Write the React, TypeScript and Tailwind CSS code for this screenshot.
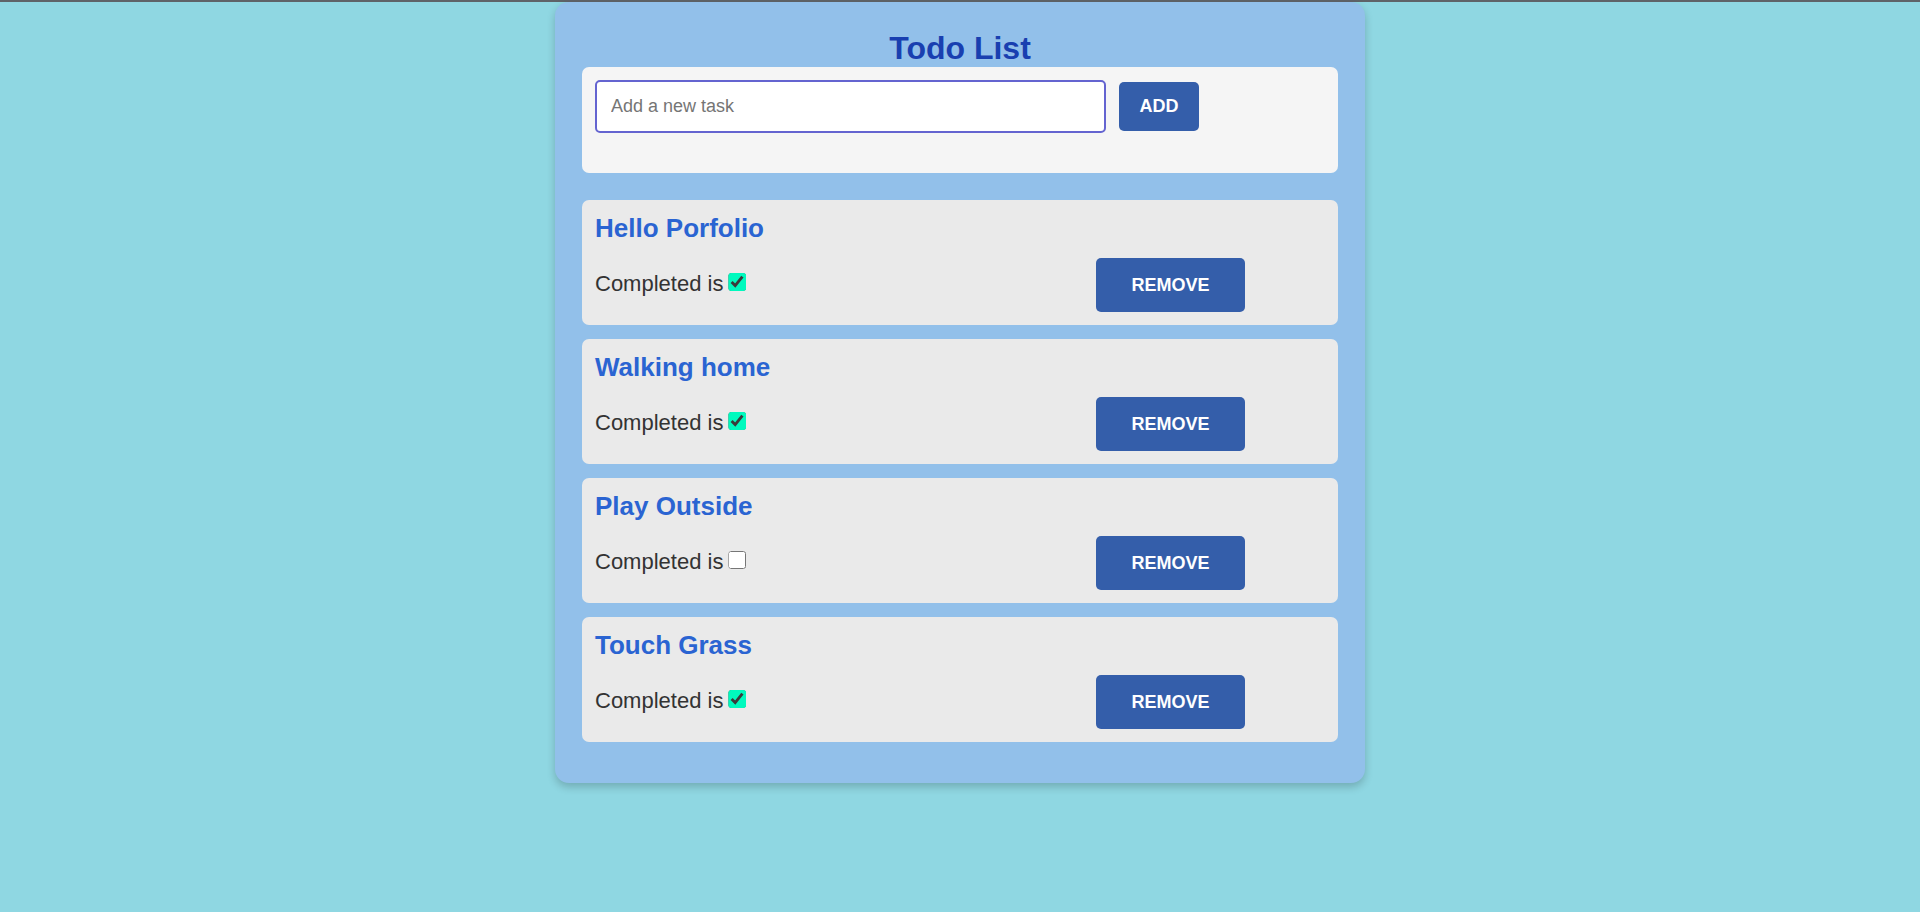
import { useState } from "react";
import type { FormEvent } from "react";

type Task = { id: number; title: string; completed: boolean };

const initialTasks: Task[] = [
  { id: 1, title: "Hello Porfolio", completed: true },
  { id: 2, title: "Walking home", completed: true },
  { id: 3, title: "Play Outside", completed: false },
  { id: 4, title: "Touch Grass", completed: true },
];

function TaskItem({
  task,
  onToggle,
  onRemove,
}: {
  task: Task;
  onToggle: () => void;
  onRemove: () => void;
}) {
  return (
    <li className="rounded-[7px] bg-[#eaeaea] p-[13px]">
      <h2 className="text-[26px] leading-[31px] font-bold text-[#2a64d2]">{task.title}</h2>
      <div className="mt-[14px] flex items-start">
        <label className="flex flex-1 items-start gap-[5px] pt-[13px] text-[22px] leading-[26px] text-[#333333]">
          Completed is
          <input
            type="checkbox"
            checked={task.completed}
            onChange={onToggle}
            className="mt-[2px] size-[18px] accent-[#00fabe] [clip-path:inset(0_round_3px)]"
          />
        </label>
        <button
          type="button"
          onClick={onRemove}
          className="mr-20 h-[54px] w-[149px] rounded-[5px] bg-[#345eaa] text-[18px] font-bold text-white uppercase"
        >
          Remove
        </button>
      </div>
    </li>
  );
}

export default function App() {
  const [tasks, setTasks] = useState<Task[]>(initialTasks);
  const [title, setTitle] = useState("");

  const addTask = (event: FormEvent) => {
    event.preventDefault();
    if (!title.trim()) return;
    setTasks([...tasks, { id: Date.now(), title: title.trim(), completed: false }]);
    setTitle("");
  };

  return (
    <div className="min-h-screen border-t-2 border-[#5f6368] bg-[#8fd7e2] font-['Liberation_Sans',Arial,sans-serif]">
      <main className="mx-auto max-w-[810px] rounded-[14px] bg-[#92c0ea] px-[27px] pt-[27px] pb-[41px] shadow-[0_4px_8px_rgba(0,0,0,0.2)]">
        <h1 className="text-center text-[32px] leading-[38px] font-bold text-[#193fb0]">Todo List</h1>
        <form
          onSubmit={addTask}
          className="flex items-center gap-[13px] rounded-[7px] bg-[#f5f5f5] px-[13px] pt-[13px] pb-[40px]"
        >
          <input
            type="text"
            aria-label="New task"
            placeholder="Add a new task"
            value={title}
            onChange={(event) => setTitle(event.target.value)}
            className="h-[53px] w-[70%] rounded-[5px] border-2 border-[#6464d0] bg-white px-[14px] text-[18px] text-[#333333] outline-none placeholder:text-[#757575]"
          />
          <button
            type="submit"
            className="h-[49px] w-[80px] rounded-[5px] bg-[#345eaa] text-[18px] font-bold text-white uppercase"
          >
            Add
          </button>
        </form>
        <ul className="mt-[27px] flex flex-col gap-[14px]">
          {tasks.map((task) => (
            <TaskItem
              key={task.id}
              task={task}
              onToggle={() =>
                setTasks(tasks.map((t) => (t.id === task.id ? { ...t, completed: !t.completed } : t)))
              }
              onRemove={() => setTasks(tasks.filter((t) => t.id !== task.id))}
            />
          ))}
        </ul>
      </main>
    </div>
  );
}
